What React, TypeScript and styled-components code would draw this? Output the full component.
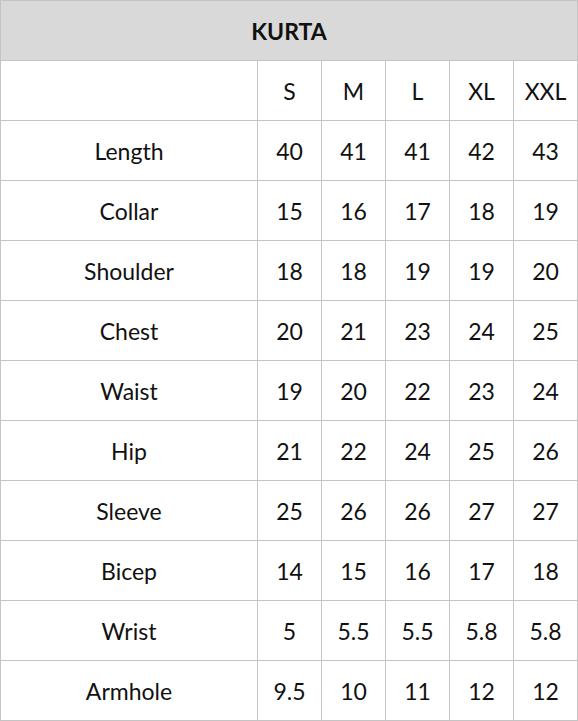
import { createGlobalStyle, styled } from "styled-components";

const GlobalStyle = createGlobalStyle`
    html, body {
        margin: 0;
        padding: 0;
        background: #fff;
    }
    body {
        font-family: Lato, "Open Sans", sans-serif;
        color: #111;
    }
`;

const Table = styled.table`
    width: 578px;
    border-collapse: collapse;
    table-layout: fixed;
`;

const Col = styled.col<{ $label?: boolean }>`
    width: ${(p) => (p.$label ? "257px" : "64px")};
`;

const TitleCell = styled.th`
    height: 60px;
    padding: 0;
    box-sizing: border-box;
    background: #d9d9d9;
    border: 1px solid #c4c4c4;
    font-size: 23px;
    font-weight: 700;
    text-align: center;
    vertical-align: middle;
`;

const Cell = styled.td`
    height: 60px;
    padding: 1px 0 0;
    border: 1px solid #c4c4c4;
    font-size: 23px;
    font-weight: 400;
    text-align: center;
    vertical-align: middle;
    box-sizing: border-box;
`;

const sizes = ["S", "M", "L", "XL", "XXL"];

const rows: [string, string[]][] = [
    ["Length", ["40", "41", "41", "42", "43"]],
    ["Collar", ["15", "16", "17", "18", "19"]],
    ["Shoulder", ["18", "18", "19", "19", "20"]],
    ["Chest", ["20", "21", "23", "24", "25"]],
    ["Waist", ["19", "20", "22", "23", "24"]],
    ["Hip", ["21", "22", "24", "25", "26"]],
    ["Sleeve", ["25", "26", "26", "27", "27"]],
    ["Bicep", ["14", "15", "16", "17", "18"]],
    ["Wrist", ["5", "5.5", "5.5", "5.8", "5.8"]],
    ["Armhole", ["9.5", "10", "11", "12", "12"]],
];

const App = () => {
    return (
        <>
            <GlobalStyle />
            <Table>
                <colgroup>
                    <Col $label />
                    {sizes.map((s) => (
                        <Col key={s} />
                    ))}
                </colgroup>
                <thead>
                    <tr>
                        <TitleCell colSpan={6}>KURTA</TitleCell>
                    </tr>
                </thead>
                <tbody>
                    <tr>
                        <Cell />
                        {sizes.map((s) => (
                            <Cell key={s}>{s}</Cell>
                        ))}
                    </tr>
                    {rows.map(([name, values]) => (
                        <tr key={name}>
                            <Cell>{name}</Cell>
                            {values.map((v, i) => (
                                <Cell key={i}>{v}</Cell>
                            ))}
                        </tr>
                    ))}
                </tbody>
            </Table>
        </>
    );
};

export default App;
